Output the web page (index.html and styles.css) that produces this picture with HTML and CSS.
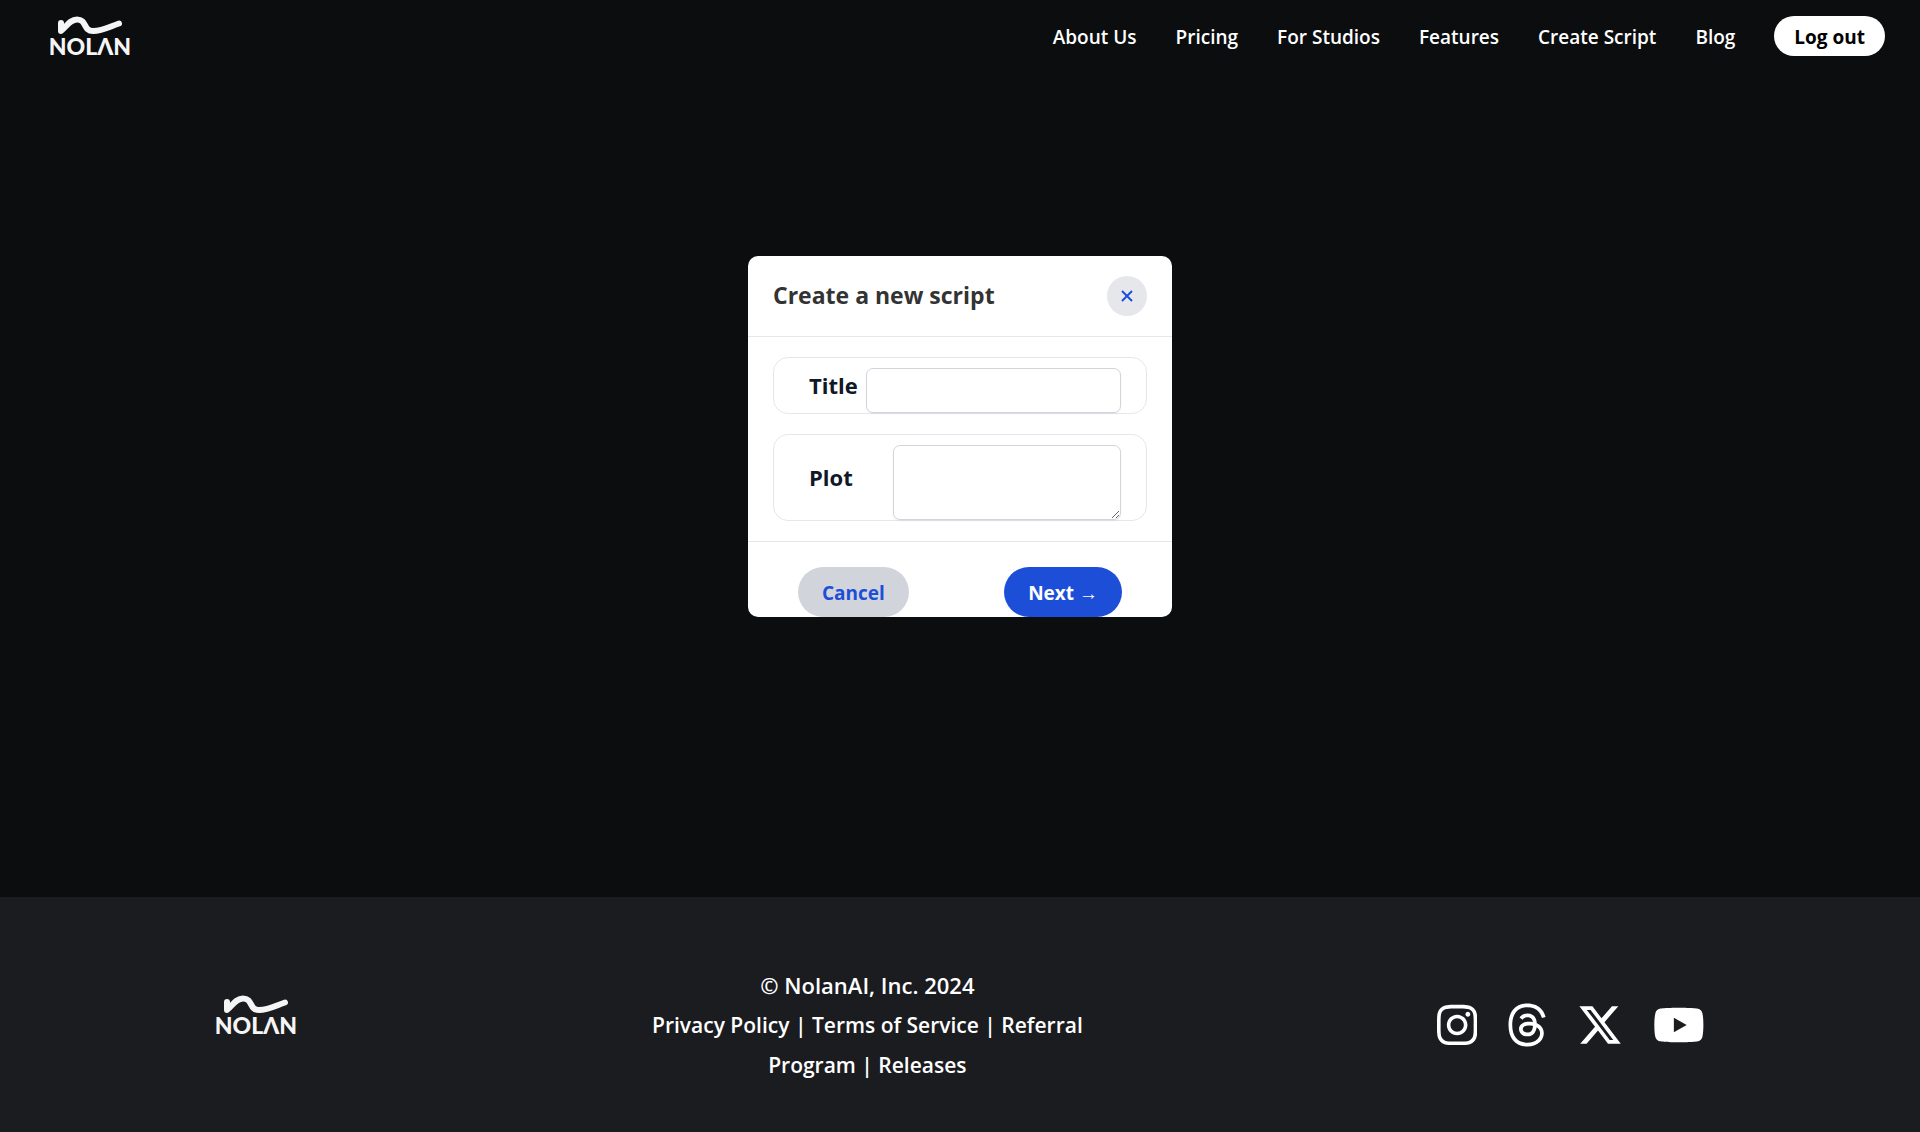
FILE: index.html
```
<!DOCTYPE html>
<html lang="en">
<head>
  <meta charset="utf-8">
  <meta name="viewport" content="width=device-width, initial-scale=1">
  <title>Nolan</title>
  <link rel="stylesheet" href="styles.css">
</head>
<body>
  <header class="site-header">
    <a class="logo" href="#">
      <svg class="logo-art" viewBox="0 0 84 48" role="img" aria-label="Nolan">
        <path class="logo-wave" d="M13 7V15C18 11 22 3.500 29 3.500C39 3.500 35 15 45 15C54 15 61 11 71 7.500"/>
        <text class="logo-word" x="42" y="39" text-anchor="middle">NOLΛN</text>
      </svg>
    </a>
    <nav class="site-nav">
      <a href="#">About Us</a>
      <a href="#">Pricing</a>
      <a href="#">For Studios</a>
      <a href="#">Features</a>
      <a href="#">Create Script</a>
      <a href="#">Blog</a>
      <button class="logout" type="button">Log out</button>
    </nav>
  </header>

  <main class="stage">
    <form class="dialog" aria-labelledby="dialog-title">
      <div class="dialog-head">
        <h1 id="dialog-title">Create a new script</h1>
        <button class="close" type="button" aria-label="Close">
          <svg viewBox="0 0 12 12" width="12" height="12" aria-hidden="true"><path d="M1 1l10 10M11 1l-10 10"/></svg>
        </button>
      </div>
      <div class="dialog-body">
        <div class="field">
          <label for="script-title">Title</label>
          <input id="script-title" type="text">
        </div>
        <div class="field field-plot">
          <label for="script-plot">Plot</label>
          <textarea id="script-plot"></textarea>
        </div>
      </div>
      <div class="dialog-foot">
        <button class="pill cancel" type="button">Cancel</button>
        <button class="pill next" type="button">Next →</button>
      </div>
    </form>
  </main>

  <footer class="site-footer">
    <a class="logo" href="#">
      <svg class="logo-art" viewBox="0 0 84 48" role="img" aria-label="Nolan">
        <path class="logo-wave" d="M13 7V15C18 11 22 3.500 29 3.500C39 3.500 35 15 45 15C54 15 61 11 71 7.500"/>
        <text class="logo-word" x="42" y="39" text-anchor="middle">NOLΛN</text>
      </svg>
    </a>
    <div class="legal">
      <p>© NolanAI, Inc. 2024</p>
      <p class="legal-links"><a href="#">Privacy Policy</a> | <a href="#">Terms of Service</a> | <a href="#">Referral Program</a> | <a href="#">Releases</a></p>
    </div>
    <div class="social">
      <a href="#" aria-label="Instagram"><svg viewBox="0 0 448 512"><path d="M224.1 141c-63.6 0-114.9 51.3-114.9 114.9s51.3 114.9 114.9 114.9S339 319.5 339 255.9 287.7 141 224.1 141zm0 189.6c-41.1 0-74.7-33.5-74.7-74.7s33.5-74.7 74.7-74.7 74.7 33.5 74.7 74.7-33.6 74.7-74.7 74.7zm146.4-194.3c0 14.9-12 26.8-26.8 26.8-14.9 0-26.8-12-26.8-26.8s12-26.8 26.8-26.8 26.8 12 26.8 26.8zm76.1 27.2c-1.7-35.9-9.9-67.7-36.2-93.9-26.2-26.2-58-34.4-93.9-36.2-37-2.1-147.9-2.1-184.9 0-35.8 1.7-67.6 9.9-93.9 36.1s-34.4 58-36.2 93.9c-2.1 37-2.1 147.9 0 184.9 1.7 35.9 9.9 67.7 36.2 93.9s58 34.4 93.9 36.2c37 2.1 147.9 2.1 184.9 0 35.9-1.7 67.7-9.9 93.9-36.2 26.2-26.2 34.4-58 36.2-93.9 2.1-37 2.1-147.8 0-184.8zM398.8 388c-7.8 19.6-22.9 34.7-42.6 42.6-29.5 11.7-99.5 9-132.1 9s-102.7 2.6-132.1-9c-19.6-7.8-34.7-22.9-42.6-42.6-11.7-29.5-9-99.5-9-132.1s-2.6-102.7 9-132.1c7.8-19.6 22.9-34.7 42.6-42.6 29.5-11.7 99.5-9 132.1-9s102.7-2.6 132.1 9c19.6 7.8 34.7 22.9 42.6 42.6 11.7 29.5 9 99.5 9 132.1s2.7 102.7-9 132.1z"/></svg></a>
      <a href="#" aria-label="Threads"><svg viewBox="0 0 448 512"><path d="M331.500 235.700c2.200 .9 4.200 1.900 6.300 2.800c29.200 14.100 50.600 35.200 61.800 61.400c15.700 36.500 17.200 95.800-30.300 143.200c-36.200 36.200-80.300 52.500-142.600 53h-.3c-70.200-.5-124.100-24.100-160.400-70.200c-32.300-41-48.900-98.100-49.500-169.600V256v-.2C17 184.300 33.600 127.200 65.900 86.200C102.200 40.100 156.200 16.500 226.400 16h.3c70.300 .5 124.900 24 162.300 69.900c18.400 22.700 32 50 40.600 81.700l-40.400 10.800c-7.100-25.800-17.800-47.800-32.200-65.400c-29.200-35.800-73-54.200-130.500-54.600c-57 .5-100.100 18.800-128.200 54.400C72.100 146.100 58.500 194.300 58 256c.5 61.700 14.100 109.900 40.300 143.300c28 35.600 71.200 53.900 128.200 54.400c51.400-.4 85.400-12.600 113.700-40.900c32.300-32.200 31.700-71.800 21.400-95.900c-6.100-14.200-17.100-26-31.900-34.900c-3.700 26.900-11.800 48.300-24.700 64.800c-17.100 21.800-41.400 33.600-72.700 35.300c-23.600 1.300-46.300-4.400-63.900-16c-20.800-13.800-33-34.800-34.300-59.300c-2.500-48.300 35.700-83 95.200-86.400c21.100-1.200 40.900-.3 59.200 2.800c-2.400-14.800-7.300-26.600-14.600-35.200c-10-11.700-25.600-17.700-46.200-17.800H227c-16.600 0-39 4.600-53.300 26.300l-34.400-23.600c19.200-29.100 50.300-45.100 87.800-45.100h.8c62.600 .4 99.900 39.500 103.700 107.700l-.2 .2zm-156 68.800c1.300 25.100 28.400 36.800 54.600 35.300c25.600-1.400 54.600-11.400 59.500-73.200c-13.200-2.900-27.800-4.400-43.400-4.400c-4.800 0-9.600 .1-14.400 .4c-42.900 2.400-57.200 23.200-56.200 41.800l-.1 .1z"/></svg></a>
      <a href="#" aria-label="X"><svg viewBox="0 0 512 512"><path d="M389.200 48h70.600L305.600 224.200 487 464H345L233.700 318.600 106.500 464H35.800L200.700 275.500 26.800 48H172.400L272.900 180.900 389.200 48zM364.400 421.800h39.100L151.100 88h-42L364.400 421.800z"/></svg></a>
      <a href="#" aria-label="YouTube"><svg viewBox="0 0 576 512"><path d="M549.655 124.083c-6.281-23.650-24.787-42.276-48.284-48.597C458.781 64 288 64 288 64S117.220 64 74.629 75.486c-23.497 6.322-42.003 24.947-48.284 48.597-11.412 42.867-11.412 132.305-11.412 132.305s0 89.438 11.412 132.305c6.281 23.650 24.787 41.500 48.284 47.821C117.220 448 288 448 288 448s170.780 0 213.371-11.486c23.497-6.321 42.003-24.171 48.284-47.821 11.412-42.867 11.412-132.305 11.412-132.305s0-89.438-11.412-132.305zm-317.510 213.508V175.185l142.739 81.205-142.739 81.201z"/></svg></a>
    </div>
  </footer>
</body>
</html>
```
FILE: styles.css
```
* {
  box-sizing: border-box;
}

body {
  margin: 0;
  min-height: 100vh;
  display: flex;
  flex-direction: column;
  background: #0b0d0f;
  color: #fff;
  font-family: "Open Sans", "Noto Sans", sans-serif;
  font-size: 19px;
  font-weight: 600;
}

a {
  color: inherit;
  text-decoration: none;
}

button {
  border: 0;
  padding: 0;
  font: inherit;
  cursor: pointer;
}

.logo,
.logo-art {
  display: block;
}

.logo-art {
  width: 84px;
  height: 48px;
  overflow: visible;
}

.logo-wave {
  fill: none;
  stroke: #f5f5f5;
  stroke-width: 6;
  stroke-linecap: round;
  stroke-linejoin: round;
}

.logo-word {
  fill: #f5f5f5;
  font-family: Lato, sans-serif;
  font-size: 23px;
  font-weight: 900;
}

/* Header */
.site-header {
  display: flex;
  align-items: flex-start;
  justify-content: space-between;
  padding: 16px 35px 8px 48px;
}

.site-nav {
  display: flex;
  align-items: center;
  gap: 39px;
  line-height: 38px;
}

.site-nav a {
  padding-top: 2px;
}

.logout {
  height: 40px;
  padding: 2px 20px 0;
  border-radius: 20px;
  background: #fff;
  color: #000;
  font-weight: 700;
}

/* Dialog */
.stage {
  flex: 1;
  padding: 184px 24px;
}

.dialog {
  max-width: 424px;
  margin: 0 auto;
  border-radius: 10px;
  background: #fff;
  color: #111827;
}

.dialog-head {
  display: flex;
  align-items: center;
  justify-content: space-between;
  padding: 20px 25px;
  border-bottom: 1px solid #e5e7eb;
}

.dialog-head h1 {
  margin: 0;
  padding-bottom: 2px;
  color: #333;
  font-size: 23px;
  font-weight: 700;
  line-height: 38px;
}

.close {
  display: grid;
  place-items: center;
  width: 40px;
  height: 40px;
  border-radius: 50%;
  background: #e5e7eb;
}

.close path {
  stroke: #1d4ed8;
  stroke-width: 2;
}

.dialog-body {
  display: flex;
  flex-direction: column;
  gap: 20px;
  padding: 20px 25px;
}

.field {
  display: flex;
  align-items: center;
  padding: 10px 25px 0 35px;
  border: 1px solid #e5e7eb;
  border-radius: 15px;
}

.field label {
  width: 57px;
  padding-bottom: 12px;
  font-size: 22px;
  font-weight: 700;
  line-height: 32px;
}

.field-plot label {
  width: 84px;
}

.field input,
.field textarea {
  flex: 1;
  min-width: 0;
  padding: 8px 12px;
  border: 1px solid #d1d5db;
  border-radius: 7px;
  background: #fff;
  box-shadow: 0 1px 2px rgba(0, 0, 0, 0.05);
  font: inherit;
}

.field input {
  height: 45px;
}

.field textarea {
  height: 75px;
}

.dialog-foot {
  display: flex;
  justify-content: space-between;
  padding: 25px 50px 0;
  border-top: 1px solid #e5e7eb;
}

.pill {
  height: 50px;
  padding: 2px 24px 0;
  border-radius: 25px;
  line-height: 48px;
  font-weight: 700;
}

.cancel {
  background: #d1d5db;
  color: #1d4ed8;
}

.next {
  background: #1d4ed8;
  color: #fff;
}

/* Footer */
.site-footer {
  display: flex;
  align-items: center;
  justify-content: space-between;
  gap: 24px;
  padding: 48px 215px 47px 214px;
  background: #1b1c20;
}

.site-footer .logo {
  padding-top: 8px;
}

.legal {
  max-width: 448px;
  padding-top: 20px;
  font-size: 22px;
  line-height: 40px;
  text-align: center;
}

.legal p {
  margin: 0;
}

.legal .legal-links {
  font-size: 21px;
}

.social {
  display: flex;
  align-items: center;
  gap: 30px;
  padding-top: 20px;
}

.social svg {
  display: block;
  height: 46px;
  fill: #fff;
}
```
